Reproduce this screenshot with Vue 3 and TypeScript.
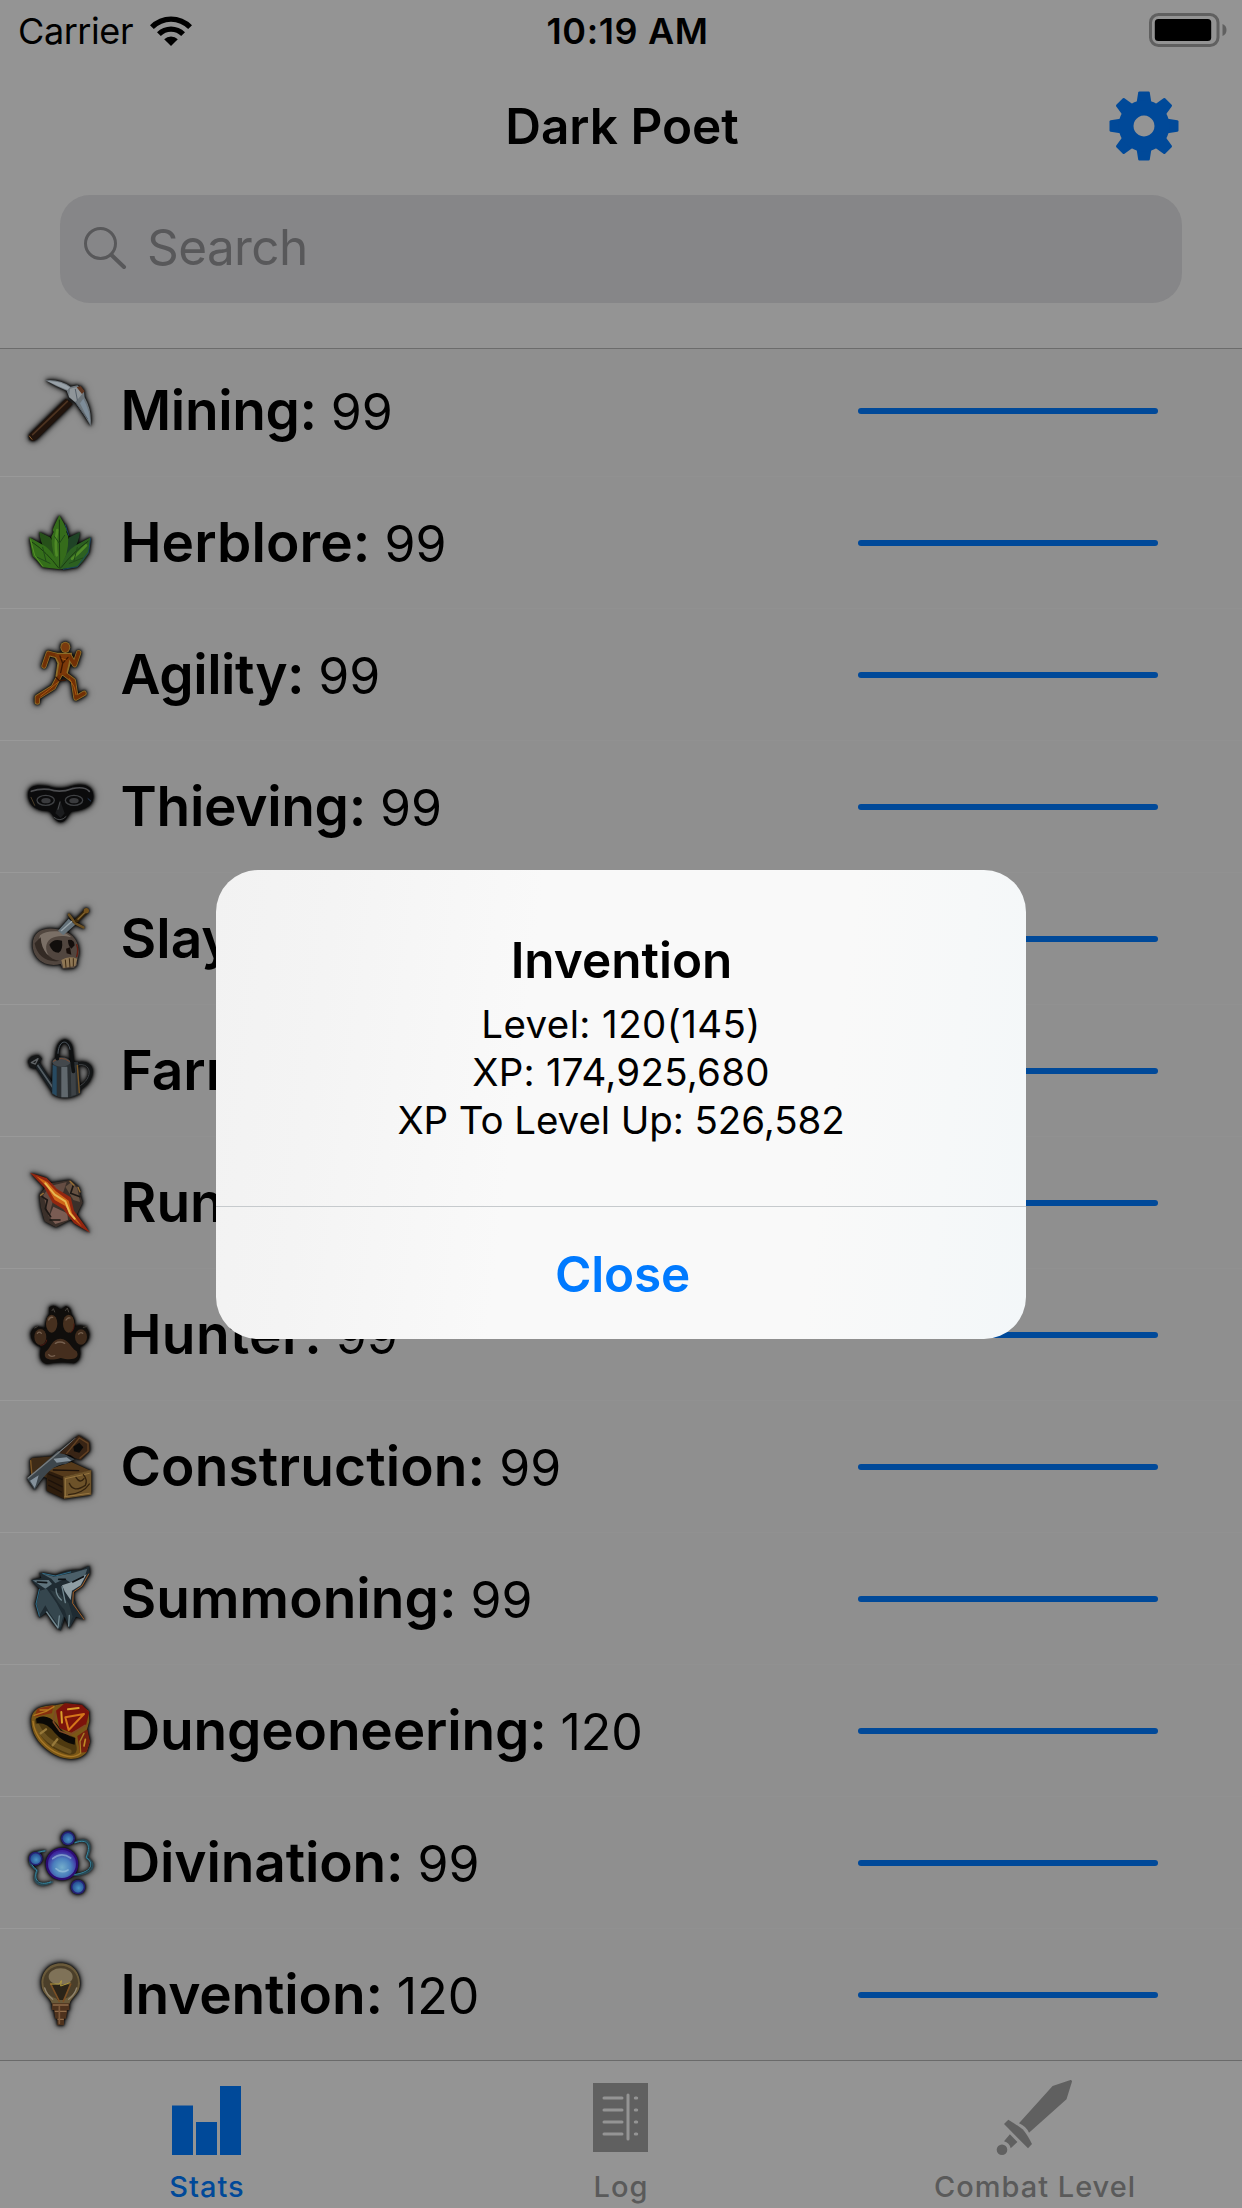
<script setup lang="ts">
interface Shape {
  d: string
  fill?: string
  stroke?: string
  w?: number
}

interface Skill {
  name: string
  level: number
  tracking: number
  originY: number
  art: Shape[]
}

const oval = (cx: number, cy: number, rx: number, ry: number = rx): string =>
  `M${cx - rx},${cy}a${rx},${ry} 0 1,0 ${rx * 2},0a${rx},${ry} 0 1,0 ${-rx * 2},0Z`
const area = (d: string, fill: string): Shape => ({ d, fill })
const line = (d: string, stroke: string, w: number): Shape => ({ d, stroke, w })

const mining: Shape[] = [
  area('M86,256L198,146L218,162L110,268Q98,278 88,268Z', '#21140d'),
  line('M98,254L202,154', '#4d3320', 5),
  line('M88,258L96,268', '#8a5f2f', 3),
  area('M136,91Q178,86 212,110L232,106L252,124L254,142Q277,182 272,228Q254,196 228,160L207,142L200,122Q168,110 136,91Z', '#6d757b'),
  area('M142,93Q180,92 210,112L202,120Q172,108 142,93Z', '#98a1a8'),
  area('M210,116L234,110L250,128L226,156L207,140Z', '#8f9599'),
  area('M250,146Q272,186 270,220L240,160Z', '#7d8c99'),
  line('M226,156L262,206M232,150L226,118', '#555e67', 3),
  area('M230,112L242,108L254,124L246,132Z', '#5e3520'),
]

const herblore: Shape[] = [
  area('M118,546Q122,600 176,658Q172,590 150,562Z', '#265019'),
  area('M240,546Q234,600 180,658Q186,590 208,562Z', '#1f4326'),
  area('M178,496Q164,524 158,540L161,546L154,560Q156,620 179,656Q206,618 205,560L199,546L201,540Q192,520 178,496Z', '#356c1b'),
  area('M88,562L98,618L110,630L128,652L180,658Q160,600 128,584Z', '#346e1a'),
  area('M272,562L266,610L250,632L232,652L180,658Q196,602 230,584Z', '#2c6021'),
  line('M172,540Q164,580 170,616M216,626Q240,606 258,586', '#4f8a26', 8),
  line('M96,576Q140,606 176,654M264,574Q220,606 184,652M178,510L179,652', '#1a3b10', 3),
  line('M112,622L150,640M128,592L138,634M232,592L222,632M248,624L208,640M164,560L178,580L194,556', '#204a19', 3),
  line('M272,564L266,606L232,650L190,658M196,524L206,556', '#1b415f', 3),
  line('M92,570L104,616L128,648', '#579026', 3),
]

const runnerLimbs = 'M168,916L145,910L132,948M208,918L224,944L236,908M182,970L160,1012L112,1042L112,1056M186,966L220,992L228,1044L252,1030'
const agility: Shape[] = [
  line(runnerLimbs, '#8d6d28', 16),
  area('M158,908L216,908L212,940L202,976L166,980L172,940Z', '#8d6d28'),
  area(oval(196, 892, 15, 17), '#8a6a28'),
  line(runnerLimbs, '#713006', 11),
  area('M163,912L211,912L206,940L198,974L172,974L178,940Z', '#7d3909'),
  area(oval(196, 892, 12, 14), '#7a3b0d'),
  line('M180,918L188,940L204,922M188,940L182,968M168,982L178,992L196,990', '#3a1603', 4),
  line('M172,998L148,1018L122,1038M208,986L222,1010L228,1034M186,926L198,930', '#a85a10', 3),
]

const thieving: Shape[] = [
  area('M84,196C84,164 112,164 142,168Q180,182 216,168C252,158 280,168 280,200C280,230 250,240 216,244C202,256 198,276 182,277C164,274 162,256 148,244C112,242 88,232 84,196Z', '#0b0b0c'),
  line('M94,184Q118,175 146,178Q180,190 216,176Q254,168 268,184', '#4c4d50', 5),
  line(oval(137, 211, 26, 15), '#3f4144', 4),
  line(oval(222, 211, 26, 15), '#3f4144', 4),
  area(oval(138, 212, 14, 8), '#3a3b3e'),
  area(oval(222, 212, 14, 8), '#3a3b3e'),
  area('M180,210L166,250L182,264L194,250Z', '#1b1c1e'),
  line('M180,216L174,238M162,262Q180,278 198,260', '#4a4c4e', 3),
  line('M93,202L104,226', '#4a3d28', 3),
  line('M264,206L272,213', '#283f60', 3),
]

const slayer: Shape[] = [
  area('M98,644C98,602 136,590 172,598C210,602 236,630 236,660C240,680 226,690 232,704L222,714L188,716L182,702C134,714 98,684 98,644Z', '#51463f'),
  area('M120,616C140,600 190,598 214,622C190,616 170,616 152,626C134,640 136,660 146,676C120,664 112,636 120,616Z', '#7a6f66'),
  area('M104,640C110,680 146,700 178,692C150,690 124,664 122,622Z', '#332a24'),
  area('M148,644Q160,624 186,632Q190,660 176,668Q156,668 148,644Z', '#110e0c'),
  area('M204,630Q222,626 224,646L214,656Q204,648 204,630Z', '#130e0c'),
  area('M198,656L210,652L214,674L200,670Z', '#180f0b'),
  area('M184,690Q206,676 232,686L226,708L190,714Z', '#8e7755'),
  line('M196,690L198,712M208,686L210,712M220,686L220,708', '#3d2a15', 3),
  line('M230,644Q236,660 230,680', '#641e12', 4),
  area('M174,602L206,566L226,584L190,616Z', '#65727a'),
  line('M184,602L216,574', '#99a5ab', 4),
  line('M207,554L226,580L250,592', '#6a4f22', 8),
  line('M230,572L258,544', '#3a280c', 12),
  line('M234,568L256,546', '#84652f', 4),
  area(oval(259, 542, 8), '#74521d'),
]

const farming: Shape[] = [
  line('M162,270L112,194', '#191f23', 17),
  line('M158,262L112,194', '#535d63', 5),
  line('M234,192C284,180 286,240 238,264', '#131516', 11),
  line('M238,194C276,190 278,234 242,256', '#3e4144', 3),
  area('M158,184L156,282Q196,306 242,280L234,186Z', '#2a2f32'),
  area('M158,194L170,200L170,288L157,280Z', '#274a61'),
  area('M184,200L202,200L204,292L184,292Z', '#60686d'),
  area('M212,200L226,196L228,284L214,288Z', '#3d4246'),
  line('M232,196L238,278', '#7a5725', 4),
  area(oval(184, 186, 27, 14), '#43484c'),
  line('M160,184Q184,166 208,184', '#7a4c33', 3),
  line('M172,176C168,112 214,108 214,160L220,214', '#0f1112', 11),
  line('M174,160C176,118 204,116 210,148', '#4c555d', 3),
  area('M84,184Q90,166 116,166L126,176L104,206L90,202Z', '#151718'),
  line('M94,188L114,176L106,192Z', '#5e6265', 4),
]

const runecrafting: Shape[] = [
  area('M118,584L148,550L210,540L234,560L248,608L226,652L168,682L134,664L122,620Z', '#3b302a'),
  area('M130,586L150,558L200,546L190,576L158,606L146,650Z', '#654d43'),
  area('M160,620L202,640L204,660L166,672L148,650Z', '#7a5c53'),
  area('M212,548L232,564L240,606L220,600L196,560Z', '#665141'),
  line('M126,590L142,600L136,626L152,650M220,556L212,580L240,590M150,660L180,660', '#1d1815', 5),
  line('M122,586L130,580M210,544L222,556M240,576L234,562', '#9a7034', 4),
  area('M90,518L140,534L170,566L212,592L222,632L270,698L222,670L190,628L158,608L132,562Z', '#922610'),
  area('M108,528L142,546L168,574L206,602L216,640L246,680L222,658L196,618L164,600L142,562Z', '#cf6517'),
  line('M136,550L164,584L196,604L210,640L224,656', '#e8b850', 6),
]

const hunter: Shape[] = [
  area('M148,142Q160,132 172,142L182,150L198,138Q214,144 214,162Q228,180 224,200Q260,188 268,222Q268,250 238,262Q248,298 222,310Q182,302 140,312Q112,304 124,262Q92,252 92,220Q100,190 136,206Q134,180 148,162Z', '#100e0c'),
  area(oval(155, 191, 17, 27), '#46301f'),
  area(oval(206, 191, 17, 27), '#46301f'),
  area(oval(121, 231, 18, 24), '#3f2b1c'),
  area(oval(243, 231, 18, 23), '#3f2b1c'),
  area('M181,236C208,238 210,262 230,274C242,298 212,302 182,294C150,304 128,298 136,276C154,262 154,238 181,236Z', '#452e1e'),
  line('M146,180Q150,170 158,172M198,180Q204,171 210,174M112,220Q118,213 124,220M236,222Q242,215 248,220M166,250Q180,242 194,250M146,284Q152,292 164,287', '#76604f', 4),
  line('M222,192Q224,208 212,218M140,240Q138,256 122,256', '#4d1a11', 3),
  line('M156,152L160,146L164,156M196,152L202,144L206,156M104,204L112,200M250,202L260,200', '#44403b', 3),
]

const construction: Shape[] = [
  area('M90,600L96,594L168,588L150,656L92,640Z', '#3e2b17'),
  line('M92,602L96,646', '#7c5624', 4),
  area('M140,630L194,648L192,716L140,692Z', '#2e1d0d'),
  area('M140,630L214,606L272,632L192,650Z', '#553a1b'),
  area('M190,650L274,630L274,704L192,716Z', '#6d5229'),
  line('M196,656L268,640M194,710L268,700M196,656L196,708', '#967540', 3),
  line('M208,670Q220,700 256,676Q264,660 250,644M228,652Q240,672 252,656M206,704Q250,700 268,672', '#33220e', 4),
  line('M146,642L186,658M146,660L186,680M146,676L184,696M160,630L236,632', '#1b110a', 4),
  area('M82,656L174,572L224,598L198,612Q150,612 104,690Z', '#3d464c'),
  area('M90,662L116,646L108,674L104,684ZM160,596L200,592L214,602L170,608Z', '#84919b'),
  line('M84,654L178,576L226,536', '#777c7e', 4),
  area('M178,580L236,526L268,546L270,572L242,600L224,594L212,586Z', '#382415'),
  line('M200,580L238,534L264,550L264,574L240,594', '#644223', 4),
  area('M220,560L238,548L250,562L238,578L222,574Z', '#0b0a09'),
]

const summoning: Shape[] = [
  area('M93,180L124,174L118,158L166,166Q198,150 242,150L268,137L270,162L246,200L220,216Q218,256 256,300L228,290L208,326L194,290L182,332L158,308L140,276L118,294L106,252L118,206Z', '#1f2b32'),
  area('M98,181L146,180L156,192L136,206Z', '#5f737c'),
  area('M124,160L162,170L220,158L262,146L252,176L214,190L194,176L166,190L154,176Z', '#4b5f69'),
  area('M186,196L234,180L260,162L242,196L216,212L212,240L194,214Z', '#8e9da3'),
  area('M120,212L140,206L170,250L190,288L180,324L148,278L136,256L118,286L110,250Z', '#35464e'),
  area('M150,210L178,220L206,250L218,290L208,316L194,270L176,250Z', '#2b393f'),
  line('M118,208L108,252L118,288M128,160L166,168L212,156', '#2f6a85', 3),
  line('M168,206Q168,226 184,240M186,200L196,248M140,276L174,324L178,288M206,318L208,286', '#71878f', 4),
  line('M266,162L246,198L220,216L218,250L252,298', '#a25d25', 3),
  line('M176,178L196,178M218,186L250,170M112,186L140,188', '#0d1114', 5),
]

const dungeoneering: Shape[] = [
  area('M94,602C94,566 126,556 166,556Q220,540 266,572L268,604L258,640L270,664L260,696C238,726 186,722 148,694C112,668 94,636 94,602Z', '#7a5717'),
  area('M104,600Q124,576 166,606Q190,640 224,652L230,682Q234,706 206,704C150,690 112,650 104,600Z', '#4e3910'),
  line('M112,618Q136,668 208,694', '#6b5220', 14),
  line('M122,640L138,628M158,676L172,658', '#97793a', 7),
  area('M108,596Q140,578 170,612Q190,646 226,654L224,674Q190,668 164,638Q140,606 110,610Z', '#0b0906'),
  line('M99,604Q106,660 162,694Q214,722 242,700', '#a67727', 4),
  area('M232,648L262,628L270,664L260,696L240,698Z', '#76200e'),
  line('M252,640L240,664L242,698', '#a87f25', 4),
  line('M256,658L252,678', '#c08a25', 5),
  area('M112,566L160,556L156,580L104,590Z', '#86300f'),
  line('M102,586L138,574L162,560M120,570L144,570', '#b5791f', 4),
  area('M168,572L194,550L246,554L268,576L258,616L214,638L178,624Z', '#7c130b'),
  line('M166,574L160,606L180,634L210,644L256,616', '#7e4a24', 5),
  line('M184,576L186,608M204,568L236,564', '#d99f2a', 6),
  line('M196,592L252,582L206,630Z', '#d4761a', 6),
]

const divination: Shape[] = [
  line('M224,158C268,138 278,166 260,204C292,220 282,254 216,256M136,182C80,188 78,220 112,242C96,268 108,298 156,276', 'rgba(45,100,120,.6)', 6),
  line('M226,158C264,144 274,166 258,202C286,222 274,250 216,254M134,183C86,188 84,220 110,240C102,266 110,290 152,276', '#3688a2', 3),
  area(oval(186, 222, 49), '#2c0c72'),
  area(oval(186, 222, 42), 'url(#orb)'),
  line('M158,206Q184,184 212,204M168,236Q184,252 204,240', 'rgba(170,205,225,.55)', 5),
  area(oval(204, 145, 21), '#262072'),
  area(oval(204, 145, 16), 'url(#bead)'),
  area(oval(107, 206, 21), '#262072'),
  area(oval(107, 206, 16), 'url(#bead)'),
  area(oval(234, 291, 22), '#262072'),
  area(oval(234, 291, 17), 'url(#bead)'),
]

const invention: Shape[] = [
  area('M182,520C220,520 240,550 240,580C240,614 214,620 208,642L156,642C150,620 124,614 124,580C124,550 144,520 182,520Z', '#6a5a3a'),
  area(oval(182, 577, 52, 50), '#4b3f2a'),
  area(oval(182, 560, 36, 25), '#7f7258'),
  area('M156,584L208,584L192,630L172,630Z', '#2b2418'),
  line('M152,582L178,634M212,582L190,634', '#7c5025', 5),
  line('M152,582L178,582L184,572L182,588L210,578', '#b09a3e', 3),
  line('M134,594Q140,614 158,628M230,594Q224,614 206,628', '#908570', 4),
  area('M156,640H208V660H202L198,686H192V706H172V686H166L162,660H156Z', '#4e321d'),
  line('M160,645H204M166,664H198M174,688H190', '#8f6b49', 4),
  line('M178,650V700', '#7a573a', 5),
]

const skills: Skill[] = [
  { name: 'Mining', level: 99, tracking: -0.37, originY: 69, art: mining },
  { name: 'Herblore', level: 99, tracking: 0.1, originY: 465, art: herblore },
  { name: 'Agility', level: 99, tracking: -0.45, originY: 861, art: agility },
  { name: 'Thieving', level: 99, tracking: -0.3, originY: 117, art: thieving },
  { name: 'Slayer', level: 99, tracking: 0, originY: 513, art: slayer },
  { name: 'Farming', level: 99, tracking: 0, originY: 99, art: farming },
  { name: 'Runecrafting', level: 99, tracking: 0, originY: 495, art: runecrafting },
  { name: 'Hunter', level: 99, tracking: 0.35, originY: 111, art: hunter },
  { name: 'Construction', level: 99, tracking: 0.1, originY: 507, art: construction },
  { name: 'Summoning', level: 99, tracking: 0.04, originY: 123, art: summoning },
  { name: 'Dungeoneering', level: 120, tracking: -0.18, originY: 519, art: dungeoneering },
  { name: 'Divination', level: 99, tracking: -0.14, originY: 105, art: divination },
  { name: 'Invention', level: 120, tracking: -0.16, originY: 501, art: invention },
]

const gearTeeth = [0, 45, 90, 135, 180, 225, 270, 315]
const logRows = [37, 49, 61, 73]
</script>

<template>
  <div class="screen">
    <header class="top">
      <div class="status">
        <div class="carrier">
          <span>Carrier</span>
          <svg class="wifi" width="42" height="30" viewBox="0 0 42 30">
            <path d="M0,9.2A29.6,29.6 0 0 1 42,9.2L38.2,13A24.2,24.2 0 0 0 3.8,13Z" />
            <path d="M7,16.2A19.8,19.8 0 0 1 35,16.2L31.2,20A14.4,14.4 0 0 0 10.8,20Z" />
            <path d="M14.2,23.2A9.7,9.7 0 0 1 27.8,23.2L21,30Z" />
          </svg>
        </div>
        <span class="time">10:19 AM</span>
        <svg class="battery" width="78" height="34" viewBox="0 0 78 34">
          <rect x="1.5" y="1.5" width="67.5" height="31" rx="8" fill="none" stroke="#606060" stroke-width="3" />
          <rect x="5.8" y="6" width="56.4" height="22" rx="3.5" />
          <path d="M73.5,11Q77.5,12.5 77.5,17T73.5,23Z" fill="#606060" />
        </svg>
      </div>
      <div class="nav">
        <h1>Dark Poet</h1>
        <svg class="gear" width="70" height="70" viewBox="-35 -35 70 70">
          <path
            v-for="a in gearTeeth"
            :key="a"
            d="M-7.6,-22L-5.8,-33.4Q-5.6,-34.5 -4.6,-34.5H4.6Q5.6,-34.5 5.8,-33.4L7.6,-22Z"
            :transform="`rotate(${a})`"
          />
          <path fill-rule="evenodd" d="M0,-25.5a25.5,25.5 0 1,0 .01,0ZM0,-10.5a10.5,10.5 0 1,1 -.01,0Z" />
        </svg>
      </div>
      <div class="search">
        <svg width="44" height="44" viewBox="0 0 44 44" fill="none" stroke="#58585a" stroke-linecap="round">
          <circle cx="17.5" cy="17.5" r="15" stroke-width="3" />
          <path d="M28.5,29L41,41" stroke-width="4" />
        </svg>
        <span>Search</span>
      </div>
    </header>

    <main class="list">
      <div v-for="s in skills" :key="s.name" class="row">
        <svg class="art" width="76" height="76" :viewBox="`72 ${s.originY} 228 228`">
          <defs>
            <radialGradient id="orb" cx=".5" cy=".62" r=".58">
              <stop offset="0" stop-color="#74aecb" />
              <stop offset=".55" stop-color="#4a7fbd" />
              <stop offset="1" stop-color="#3c229c" />
            </radialGradient>
            <radialGradient id="bead" cx=".55" cy=".6" r=".6">
              <stop offset="0" stop-color="#4c94c4" />
              <stop offset="1" stop-color="#234a90" />
            </radialGradient>
          </defs>
          <path
            v-for="(p, i) in s.art"
            :key="i"
            :d="p.d"
            :fill="p.fill ?? 'none'"
            :stroke="p.stroke ?? 'none'"
            :stroke-width="p.w ?? 0"
            stroke-linejoin="round"
            stroke-linecap="round"
          />
        </svg>
        <div class="label">
          <b :style="{ letterSpacing: s.tracking + 'px' }">{{ s.name }}:</b>
          <span>{{ s.level }}</span>
        </div>
        <div class="progress"></div>
      </div>
    </main>

    <nav class="tabs">
      <div class="tab active">
        <svg width="120" height="100" viewBox="0 0 120 100">
          <path d="M25,44.5h21v49.5h-21ZM49,61h21v33h-21ZM73,25h21v69h-21Z" />
        </svg>
        <span>Stats</span>
      </div>
      <div class="tab">
        <svg width="120" height="100" viewBox="0 0 120 100">
          <rect x="32" y="22" width="55" height="69" />
          <g stroke="#949494" stroke-width="3" stroke-linecap="round">
            <path v-for="y in logRows" :key="y" :d="`M43,${y}H61M74.3,${y}H75.7`" />
            <path d="M67,34V78" />
          </g>
        </svg>
        <span>Log</span>
      </div>
      <div class="tab">
        <svg width="120" height="100" viewBox="0 0 120 100">
          <path d="M95.5,19Q97,18.8 97,20.5L91.5,38.3L54,71.7Q51,65.2 44,62.3L77.6,25Z" />
          <path d="M33.3,58.7L29,63L53,87.3L57,83Q52,73 47.6,68.3Q42,64 33.3,58.7Z" />
          <path d="M34.9,73.3L42.4,81L35.7,87.3Q34.5,82 29,80.3Z" />
          <circle cx="27" cy="88.7" r="5.3" />
        </svg>
        <span>Combat Level</span>
      </div>
    </nav>

    <section class="alert">
      <div class="body">
        <h2>Invention</h2>
        <p class="l1">Level: 120(145)</p>
        <p class="l2">XP: 174,925,680</p>
        <p class="l3">XP To Level Up: 526,582</p>
      </div>
      <div class="close">Close</div>
    </section>
  </div>
</template>

<style>
body {
  margin: 0;
  background: #8f8f8f;
}
</style>

<style scoped>
.screen {
  position: relative;
  width: 1242px;
  height: 2208px;
  overflow: hidden;
  display: flex;
  flex-direction: column;
  background: #8f8f8f;
  color: #000;
  font-family: Inter, "Liberation Sans", sans-serif;
}
h1, h2, p {
  margin: 0;
}
.top {
  flex: none;
  box-sizing: border-box;
  height: 345px;
  background: #949494;
  box-shadow: 0 3px 0 #949494, 0 4px 0 #6c6c6c;
  z-index: 1;
}
.status {
  display: grid;
  grid-template-columns: 1fr auto 1fr;
  align-items: center;
  height: 62px;
  margin-bottom: -2px;
  padding: 0 15px 0 18px;
  font-size: 36px;
  line-height: 62px;
}
.carrier {
  display: flex;
  align-items: center;
  gap: 17px;
  letter-spacing: -0.42px;
}
.time {
  font-weight: 600;
  letter-spacing: 0.62px;
  padding-left: 10px;
}
.battery {
  justify-self: end;
  margin-top: -2px;
}
.nav {
  display: grid;
  grid-template-columns: 1fr auto 1fr;
  align-items: center;
  height: 132px;
  padding: 0 63px 0 64px;
}
.nav h1 {
  grid-column: 2;
  font-size: 49.5px;
  font-weight: 600;
  line-height: 132px;
  margin-left: 1px;
}
.gear {
  justify-self: end;
  margin-top: -1px;
  fill: #004999;
}
.search {
  display: flex;
  align-items: center;
  gap: 22px;
  height: 108px;
  margin: 3px 60px 0;
  padding-left: 23px;
  box-sizing: border-box;
  border-radius: 30px;
  background: #868688;
  color: #58585a;
  font-size: 49.5px;
  letter-spacing: -0.6px;
}
.search svg {
  margin-top: -2px;
}
.search span {
  line-height: 104px;
  margin: -4px 0 0 -2px;
}
.list {
  flex: none;
}
.row {
  display: flex;
  align-items: center;
  height: 132px;
  padding: 0 84px 0 24px;
  background: linear-gradient(90deg, #999 60px, #919191 60px) 0 100% / 100% 1px no-repeat;
  box-sizing: border-box;
}
.art {
  flex: none;
  overflow: visible;
  filter: drop-shadow(0 0 1px #000) drop-shadow(0 0 2px rgba(0, 0, 0, 0.9)) drop-shadow(0 0 3px rgba(0, 0, 0, 0.55));
}
.label {
  display: flex;
  align-items: baseline;
  height: 130px;
  margin: -2px 0 0 20.5px;
  line-height: 130px;
  gap: 14px;
}
.label b {
  font-size: 55px;
  font-weight: 600;
}
.label span {
  font-size: 50px;
}
.progress {
  width: 300px;
  height: 6px;
  margin-left: auto;
  border-radius: 3px;
  background: #004999;
}
.tabs {
  flex: none;
  display: flex;
  height: 148px;
  margin-top: -1px;
  box-sizing: border-box;
  border-top: 1px solid #6a6a6a;
  background: #949494;
}
.tab {
  flex: 1;
  display: flex;
  flex-direction: column;
  align-items: center;
  fill: #606060;
  color: #5a5a5a;
  font-size: 29px;
  font-weight: 500;
  line-height: 52px;
  letter-spacing: 1px;
}
.tab.active {
  fill: #004999;
  color: #004999;
}
.tab svg {
  flex: none;
  display: block;
}
.alert {
  position: absolute;
  z-index: 2;
  left: 216px;
  top: 870px;
  width: 810px;
  height: 469px;
  border-radius: 42px;
  overflow: hidden;
  background: linear-gradient(97deg, #f2f2f2 0, #f4f4f4 14%, #f9f9f9 38%, #f9f9f9 74%, #f6f8f9 88%, #f3f7f9 100%);
  text-align: center;
}
.body {
  box-sizing: border-box;
  height: 337px;
  padding-top: 58px;
  border-bottom: 1px solid #c6cacd;
}
.body h2 {
  font-size: 49.5px;
  font-weight: 600;
  line-height: 64px;
  padding-left: 1px;
}
.body p {
  font-size: 38.5px;
  line-height: 48px;
}
.body .l1 {
  padding-top: 8px;
  letter-spacing: 0.4px;
}
.body .l2 {
  letter-spacing: 0.21px;
}
.body .l3 {
  letter-spacing: -0.09px;
}
.close {
  color: #007aff;
  font-size: 49.5px;
  font-weight: 600;
  line-height: 134px;
  letter-spacing: -0.2px;
  padding-left: 3px;
}
</style>
